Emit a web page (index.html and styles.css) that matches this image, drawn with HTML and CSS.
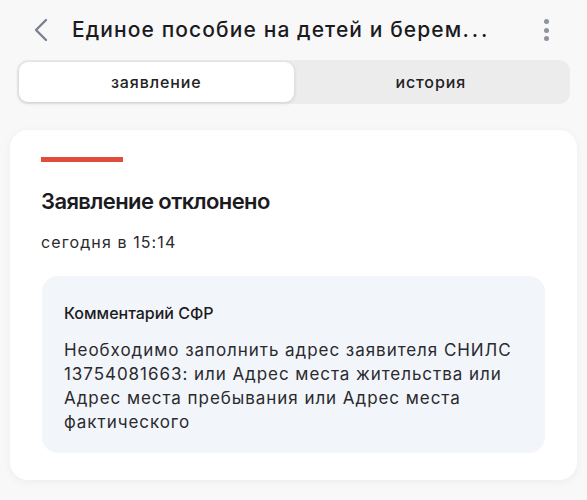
FILE: index.html
```html
<!DOCTYPE html>
<html lang="ru">

<head>
    <meta charset="UTF-8">
    <meta name="viewport" content="width=device-width, initial-scale=1.0">
    <title>Заявление</title>
    <link rel="stylesheet" href="styles.css">
</head>

<body>
    <div class="screen">
        <header class="top-bar">
            <button class="icon-btn back-btn" aria-label="Назад">
                <svg width="16" height="24" viewBox="0 0 16 24">
                    <path d="M13 2 L3 12 L13 22" fill="none" stroke="#7b8090" stroke-width="2.4"
                        stroke-linecap="round" stroke-linejoin="round" />
                </svg>
            </button>
            <h1 class="page-title">Единое пособие на детей и берем<span class="title-dots">...</span></h1>
            <button class="icon-btn more-btn" aria-label="Ещё">
                <span class="dot"></span>
                <span class="dot"></span>
                <span class="dot"></span>
            </button>
        </header>

        <nav class="tabs">
            <div class="tab tab-active">заявление</div>
            <div class="tab">история</div>
        </nav>

        <section class="status-card">
            <div class="status-bar"></div>
            <h2 class="status-title">Заявление отклонено</h2>
            <p class="status-date">сегодня в 15:14</p>

            <div class="comment-box">
                <h3 class="comment-title">Комментарий СФР</h3>
                <p class="comment-text">Необходимо заполнить адрес заявителя СНИЛС 13754081663: или Адрес места
                    жительства или Адрес места пребывания или Адрес места фактического</p>
            </div>
        </section>
    </div>
</body>

</html>
```

FILE: styles.css
```css
* {
    margin: 0;
    padding: 0;
    box-sizing: border-box;
}

body {
    font-family: 'Inter', 'Noto Sans', sans-serif;
    color: #1b1b1f;
    background-color: #f8f8f9;
}

.screen {
    width: 587px;
    height: 500px;
    overflow: hidden;
}

.top-bar {
    height: 60px;
    padding: 0 33px 0 31px;
    display: flex;
    align-items: center;
}

.icon-btn {
    border: none;
    background: none;
    display: flex;
    align-items: center;
    justify-content: center;
}

.back-btn {
    width: 20px;
    height: 28px;
    margin-right: 21px;
}

.page-title {
    font-size: 21px;
    line-height: 26px;
    font-weight: 500;
    letter-spacing: 1.1px;
    white-space: nowrap;
}

.title-dots {
    letter-spacing: 3px;
}

.more-btn {
    margin-left: auto;
    width: 16px;
    height: 28px;
    flex-direction: column;
    gap: 3.5px;
}

.dot {
    width: 5px;
    height: 5px;
    border-radius: 50%;
    background-color: #8f939d;
}

.tabs {
    margin: 0 17px;
    height: 44px;
    padding: 2px;
    border-radius: 11px;
    background-color: #ececed;
    display: flex;
}

.tab {
    flex: 1;
    display: flex;
    align-items: center;
    justify-content: center;
    font-size: 16px;
    line-height: 20px;
    font-weight: 500;
    letter-spacing: 0.9px;
    color: #222;
    border-radius: 9px;
}

.tab-active {
    background-color: #fff;
    box-shadow: 0 1px 4px rgba(0, 0, 0, 0.14);
}

.status-card {
    margin: 26px 10px 0;
    padding: 27px 32px 27px 31px;
    background-color: #fff;
    border-radius: 18px;
    box-shadow: 0 2px 10px rgba(0, 0, 0, 0.05);
}

.status-bar {
    width: 82px;
    height: 5px;
    background-color: #e04d3d;
}

.status-title {
    margin-top: 25px;
    font-size: 22px;
    line-height: 28px;
    font-weight: 600;
    letter-spacing: -0.6px;
}

.status-date {
    margin-top: 17px;
    font-size: 16px;
    line-height: 20px;
    letter-spacing: 1.1px;
    color: #2a2a2e;
}

.comment-box {
    margin-top: 24px;
    margin-left: 1px;
    padding: 27px 22px 19px;
    background-color: #f2f5fa;
    border-radius: 16px;
}

.comment-title {
    font-size: 16px;
    line-height: 20px;
    font-weight: 500;
}

.comment-text {
    margin-top: 15px;
    font-size: 17px;
    line-height: 24px;
    letter-spacing: 0.95px;
    color: #2a2a2e;
}
```
